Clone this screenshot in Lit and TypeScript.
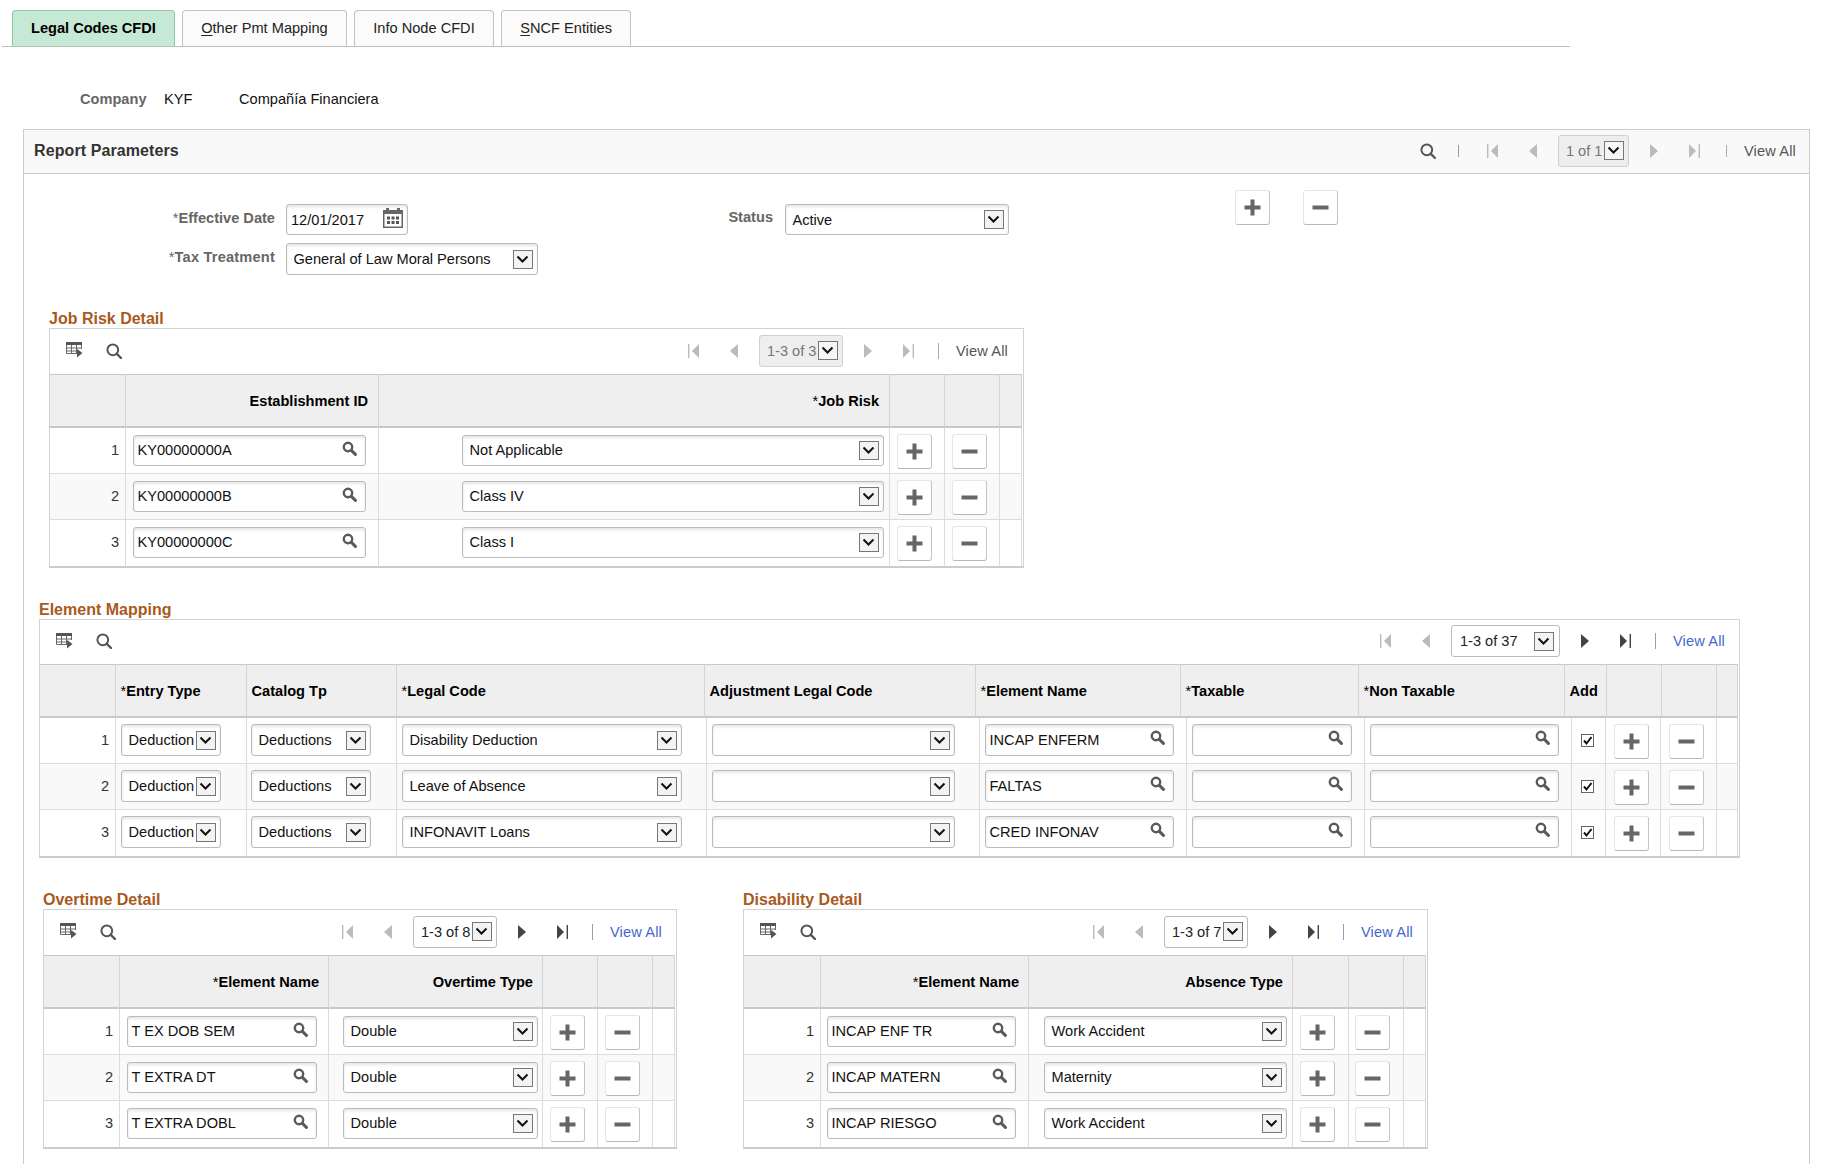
import { LitElement, html, css, svg, nothing } from "lit";
import { customElement } from "lit/decorators.js";

const searchIcon = html`<svg class="tool-search" width="16" height="16" viewBox="0 0 16 16"><circle cx="6.8" cy="6.8" r="5.4" fill="none" stroke="#555" stroke-width="2"/><path d="M10.8 10.8L15 15" stroke="#555" stroke-width="2.4" stroke-linecap="round"/></svg>`;
const promptIcon = html`<svg class="prompt" width="15" height="15" viewBox="0 0 15 15"><circle cx="6" cy="6" r="4.2" fill="none" stroke="#5a5a5a" stroke-width="2.4"/><path d="M9.4 9.4L13.4 13.4" stroke="#5a5a5a" stroke-width="3" stroke-linecap="round"/></svg>`;
const tableIcon = html`<svg class="tool-table" width="17" height="16" viewBox="0 0 17 16"><path d="M0 0H16V3H0Z" fill="#555"/><path d="M.5 3V11.5H11M15.5 3V7M5.5 3V11.5M10.5 3V11M.5 6H15.5M.5 9H11" fill="none" stroke="#666" stroke-width="1"/><path d="M11 7L16.5 11L11 15.5Z" fill="#555"/></svg>`;
const calendarIcon = html`<svg class="cal" width="20" height="20" viewBox="0 0 20 20"><path d="M3 0h3v2h8V0h3v2h3v18H0V2h3z" fill="#666"/><rect x="1.5" y="6" width="17" height="12.5" fill="#fff"/><g fill="#555"><rect x="4" y="8.5" width="3" height="3"/><rect x="8.5" y="8.5" width="3" height="3"/><rect x="13" y="8.5" width="3" height="3"/><rect x="4" y="13" width="3" height="3"/><rect x="8.5" y="13" width="3" height="3"/><rect x="13" y="13" width="3" height="3"/></g></svg>`;
const chevron = svg`<path d="M3.5 5.5L8.5 10.5L13.5 5.5" fill="none" stroke="#111" stroke-width="2"/>`;

const navIcon = (kind: string, on: boolean) => {
  const c = on ? "#444" : "#bbb";
  if (kind === "first") return html`<svg class="nav-ic" width="11" height="14" viewBox="0 0 11 14"><rect x="0" y="0" width="1.4" height="14" fill="${c}"/><path d="M11 0V14L4 7Z" fill="${c}"/></svg>`;
  if (kind === "prev") return html`<svg class="nav-ic i-prev" width="8" height="14" viewBox="0 0 8 14"><path d="M8 0V14L0 7Z" fill="${c}"/></svg>`;
  if (kind === "next") return html`<svg class="nav-ic i-next" width="8" height="14" viewBox="0 0 8 14"><path d="M0 0V14L8 7Z" fill="${c}"/></svg>`;
  return html`<svg class="nav-ic i-last" width="11" height="14" viewBox="0 0 11 14"><path d="M0 0V14L7 7Z" fill="${c}"/><rect x="9.6" y="0" width="1.4" height="14" fill="${c}"/></svg>`;
};

type Col = { w: number; label?: string };
type Cell =
  | { t: "num"; v: string }
  | { t: "in" | "sel"; v: string; w: number; ml: number }
  | { t: "chk" | "add" | "del"; ml: number }
  | { t: "end" };

type GridDef = {
  cls: string;
  title: string;
  right: boolean;
  head: Col[];
  body: number[];
  rows: Cell[][];
  pager: string;
  live: boolean;
  wide?: boolean;
  tight?: boolean;
};

const rowsFor = (ids: string[], mk: (i: number) => Cell[]): Cell[][] => ids.map((n, i) => [{ t: "num", v: n } as Cell, ...mk(i)]);

const jobRisk = ["Not Applicable", "Class IV", "Class I"];
const jobIds = ["KY00000000A", "KY00000000B", "KY00000000C"];
const legal = ["Disability Deduction", "Leave of Absence", "INFONAVIT Loans"];
const elem = ["INCAP ENFERM", "FALTAS", "CRED INFONAV"];
const ot = ["T EX DOB SEM", "T EXTRA DT", "T EXTRA DOBL"];
const dis = ["INCAP ENF TR", "INCAP MATERN", "INCAP RIESGO"];
const abs = ["Work Accident", "Maternity", "Work Accident"];
const nums = ["1", "2", "3"];

const grids: Record<string, GridDef> = {
  job: {
    cls: "g-job", title: "Job Risk Detail", right: true, pager: "1-3 of 3", live: false,
    head: [{ w: 76 }, { w: 253, label: "Establishment ID" }, { w: 511, label: "*Job Risk" }, { w: 55 }, { w: 55 }, { w: 22 }],
    body: [76, 253, 511, 55, 55, 22],
    rows: rowsFor(nums, (i) => [
      { t: "in", v: jobIds[i], w: 233, ml: 7 },
      { t: "sel", v: jobRisk[i], w: 422, ml: 83 },
      { t: "add", ml: 7 }, { t: "del", ml: 7 }, { t: "end" },
    ]),
  },
  map: {
    cls: "g-map", title: "Element Mapping", right: false, pager: "1-3 of 37", live: true, wide: true, tight: true,
    head: [{ w: 76 }, { w: 131, label: "*Entry Type" }, { w: 150, label: "Catalog Tp" }, { w: 308, label: "*Legal Code" }, { w: 271, label: "Adjustment Legal Code" }, { w: 205, label: "*Element Name" }, { w: 178, label: "*Taxable" }, { w: 206, label: "*Non Taxable" }, { w: 42, label: "Add" }, { w: 55 }, { w: 55 }, { w: 21 }],
    body: [76, 131, 150, 310, 273, 207, 178, 207, 34, 55, 56, 21],
    rows: rowsFor(nums, (i) => [
      { t: "sel", v: "Deduction", w: 100, ml: 5 },
      { t: "sel", v: "Deductions", w: 120, ml: 4 },
      { t: "sel", v: legal[i], w: 280, ml: 5 },
      { t: "sel", v: "", w: 243, ml: 5 },
      { t: "in", v: elem[i], w: 189, ml: 5 },
      { t: "in", v: "", w: 160, ml: 5 },
      { t: "in", v: "", w: 189, ml: 5 },
      { t: "chk", ml: 9 },
      { t: "add", ml: 8 }, { t: "del", ml: 8 }, { t: "end" },
    ]),
  },
  ot: {
    cls: "g-ot", title: "Overtime Detail", right: true, pager: "1-3 of 8", live: true,
    head: [{ w: 76 }, { w: 209, label: "*Element Name" }, { w: 214, label: "Overtime Type" }, { w: 55 }, { w: 55 }, { w: 22 }],
    body: [76, 209, 214, 55, 55, 22],
    rows: rowsFor(nums, (i) => [
      { t: "in", v: ot[i], w: 190, ml: 7 },
      { t: "sel", v: "Double", w: 195, ml: 14 },
      { t: "add", ml: 7 }, { t: "del", ml: 7 }, { t: "end" },
    ]),
  },
  dis: {
    cls: "g-dis", title: "Disability Detail", right: true, pager: "1-3 of 7", live: true,
    head: [{ w: 77 }, { w: 208, label: "*Element Name" }, { w: 264, label: "Absence Type" }, { w: 56 }, { w: 55 }, { w: 22 }],
    body: [77, 208, 264, 56, 55, 22],
    rows: rowsFor(nums, (i) => [
      { t: "in", v: dis[i], w: 189, ml: 6 },
      { t: "sel", v: abs[i], w: 243, ml: 15 },
      { t: "add", ml: 7 }, { t: "del", ml: 6 }, { t: "end" },
    ]),
  },
};

@customElement("app-root")
export class AppRoot extends LitElement {
  static styles = css`
    :host { display: block; width: 1822px; height: 1164px; overflow: hidden; background: #fff; font-family: "Liberation Sans", Arial, sans-serif; font-size: 14.6px; color: #111; }
    * { box-sizing: border-box; }
    svg { display: block; flex: none; }

    .tabs { display: flex; gap: 7px; width: 1568px; height: 37px; margin: 10px 0 0 2px; padding-left: 10px; border-bottom: 1px solid #bdbdbd; }
    .tab { height: 36px; padding: 0 18.3px; line-height: 34px; border: 1px solid #c2c2c2; border-bottom: none; border-radius: 4px 4px 0 0; background: #fbfbfb; color: #222; white-space: nowrap; }
    .tab.on { background: #c6e9d5; border-color: #96c4aa; font-weight: bold; color: #000; padding: 0 18px; }
    .tab u { text-underline-offset: 2px; }

    .company { display: flex; height: 20px; line-height: 20px; margin: 42px 0 0 80px; }
    .company b { color: #666; width: 84px; }
    .company span:nth-child(2) { width: 75px; }

    .box { width: 1787px; height: 1035px; margin: 20px 0 0 23px; border: 1px solid #ccc; border-bottom: none; }
    .box-head { display: flex; align-items: center; height: 44px; padding: 0 13px 2px 10px; background: #f9f9f9; border-bottom: 1px solid #ccc; }
    .box-title { font-weight: bold; font-size: 16px; letter-spacing: .1px; color: #333; }
    .box-head .sep1 { width: 1px; height: 12px; background: #999; margin: 0 28px 0 22px; }
    .box-head .tool-search { margin-left: auto; }
    .box-head .nav { margin-left: 0; }
    .box-head .sep { margin-left: 26px; height: 12px; background: #999; }
    .box-head .pager { width: 71px; }

    .form { display: flex; padding-top: 16px; }
    .form-left { display: grid; grid-template-columns: 251px 252px; column-gap: 11px; row-gap: 8px; width: 514px; margin-top: 14px; }
    .lbl { font-weight: bold; color: #666; text-align: right; line-height: 18px; white-space: nowrap; }
    .lbl .star, .hd .star { font-weight: normal; }
    .form-left .l1 { padding-top: 5px; }
    .form-left .l2 { padding-top: 5px; letter-spacing: .2px; }
    .status { display: flex; margin-top: 14px; }
    .status .lbl { width: 235px; margin-right: 12px; padding-top: 4px; }
    .form .plus-1 { margin-left: 226px; }
    .form .minus-1 { margin-left: 33px; }

    .ctl { position: relative; display: flex; align-items: center; flex: none; height: 31px; background: #fff; border: 1px solid #bbb; border-radius: 3px; box-shadow: inset 0 2px 3px rgba(0,0,0,.1); color: #111; white-space: nowrap; overflow: hidden; }
    .cell .ctl > span { margin-top: -2px; }
    .tight .cell .ctl > span { margin-top: 0; }
    .in { padding-left: 3.5px; }
    .sel { padding-left: 6.5px; }
    .date { width: 122px; padding-left: 4px; }
    .tax { width: 252px; height: 32px; }
    .stat { width: 224px; }
    .drop { display: block; width: 20px; height: 19px; margin-left: auto; margin-right: 4px; background: #f3f3f3; border: 1px solid #777; flex: none; }
    .prompt { margin-left: auto; margin-right: 8px; margin-top: -5px; }
    .cal { margin-left: auto; margin-right: 4px; margin-top: -3px; }

    .btn { display: flex; align-items: center; justify-content: center; flex: none; width: 35px; height: 35px; background: #fff; border: 1px solid #e6e6e6; border-right-color: #c4c4c4; border-bottom-color: #b8b8b8; border-radius: 3px; }

    .sec-title { font-weight: bold; font-size: 16px; color: #a9591c; line-height: 19px; height: 19px; white-space: nowrap; }
    .g-job-wrap { margin: 34px 0 0 25px; }
    .g-map-wrap { margin: 32px 0 0 15px; }
    .bottom { display: flex; gap: 66px; margin: 32px 0 0 19px; }
    .grid { border: 1px solid #d2d2d2; border-bottom: 2px solid #ccc; padding-right: 1px; }
    .g-job { width: 975px; }
    .g-map { width: 1701px; }
    .g-ot { width: 634px; }
    .g-dis { width: 685px; }

    .toolbar { display: flex; align-items: center; height: 45px; padding: 0 13px 2px 16px; }
    .g-job .toolbar { padding-right: 14px; }
    .g-map .toolbar { height: 44px; }
    .tool-table { margin-top: -1px; }
    .toolbar .tool-search { margin-left: 23px; }
    .nav { display: flex; align-items: center; margin-left: auto; }
    .i-prev { margin-left: 31px; }
    .pager { display: flex; align-items: center; justify-content: space-between; width: 84px; height: 32px; margin-left: 21px; padding: 0 5px 0 7px; background: #fff; border: 1px solid #bbb; border-radius: 3px; color: #222; white-space: nowrap; }
    .pager .drop { margin: 0 0 0 2px; }
    .pager.off { background: #eee; color: #777; border-color: #d0d0d0; }
    .pager.off .drop { background: #f6f6f6; }
    .pager.wide { width: 109px; padding-left: 8px; }
    .i-next { margin-left: 21px; }
    .i-last { margin-left: 31px; }
    .sep { width: 1px; height: 16px; margin-left: 24px; background: #8f9fb8; }
    .sep.off { background: #b3a999; }
    .view { margin-left: 17px; letter-spacing: .15px; color: #3f69cc; white-space: nowrap; }
    .view.off { color: #555; }

    .hrow, .brow { display: grid; }
    .hd { height: 54px; display: flex; align-items: center; padding: 0 4.5px; background: #efefef; border-top: 1px solid #c8c8c8; border-bottom: 2px solid #c8c8c8; border-right: 1px solid #d4d4d4; font-weight: bold; color: #000; white-space: nowrap; }
    .right .hd { justify-content: flex-end; padding-right: 9px; }
    .g-job .hd { padding-right: 10px; }
    .cell { display: flex; align-items: flex-start; height: 46px; padding-top: 6px; border-right: 1px solid #dcdcdc; border-bottom: 1px solid #dcdcdc; }
    .brow:last-child .cell { border-bottom: none; }
    .brow.alt { background: #f9f9f9; }
    .cell .ctl { margin-top: 1px; }
    .tight .cell .ctl { margin-top: 0; height: 32px; }
    .num { display: block; width: 100%; padding-right: 6px; line-height: 32px; text-align: right; color: #333; }
    .chk { margin-top: 10px; }
  `;

  private drop() {
    return html`<svg class="drop" viewBox="0 0 18 17">${chevron}</svg>`;
  }

  private addBtn(cls = "", ml?: number) {
    return html`<div class="btn ${cls}" style=${ml === undefined ? nothing : `margin-left:${ml}px`}><svg width="17" height="17" viewBox="0 0 17 17"><path d="M6.5 0.5h4v6h6v4h-6v6h-4v-6h-6v-4h6z" fill="#666"/></svg></div>`;
  }

  private delBtn(cls = "", ml?: number) {
    return html`<div class="btn ${cls}" style=${ml === undefined ? nothing : `margin-left:${ml}px`}><svg width="17" height="5" viewBox="0 0 17 5"><rect x="0.5" y="0.5" width="16" height="4" fill="#666"/></svg></div>`;
  }

  private nav(text: string, live: boolean, wide = false, view = live) {
    return html`<div class="nav">
      ${navIcon("first", false)}${navIcon("prev", false)}
      <div class="pager ${live ? "" : "off"} ${wide ? "wide" : ""}"><span>${text}</span>${this.drop()}</div>
      ${navIcon("next", live)}${navIcon("last", live)}
      <div class="sep ${view ? "" : "off"}"></div>
      <span class="view ${view ? "" : "off"}">View All</span>
    </div>`;
  }

  private star(label?: string) {
    if (!label) return nothing;
    return label.startsWith("*") ? html`<span class="star">*</span>${label.slice(1)}` : label;
  }

  private cell(c: Cell) {
    switch (c.t) {
      case "num":
        return html`<div class="cell"><span class="num">${c.v}</span></div>`;
      case "in":
        return html`<div class="cell"><div class="ctl in" style="width:${c.w}px;margin-left:${c.ml}px"><span>${c.v}</span>${promptIcon}</div></div>`;
      case "sel":
        return html`<div class="cell"><div class="ctl sel" style="width:${c.w}px;margin-left:${c.ml}px"><span>${c.v}</span>${this.drop()}</div></div>`;
      case "chk":
        return html`<div class="cell"><svg class="chk" style="margin-left:${c.ml}px" width="13" height="13" viewBox="0 0 13 13"><rect x=".5" y=".5" width="12" height="12" fill="#fff" stroke="#666"/><path d="M3 6.5L5.5 9.5L10.5 3" fill="none" stroke="#111" stroke-width="2"/></svg></div>`;
      case "add":
        return html`<div class="cell">${this.addBtn("", c.ml)}</div>`;
      case "del":
        return html`<div class="cell">${this.delBtn("", c.ml)}</div>`;
      default:
        return html`<div class="cell"></div>`;
    }
  }

  private grid(d: GridDef) {
    return html`<div class="sec-title">${d.title}</div>
      <div class="grid ${d.cls} ${d.tight ? "tight" : ""} ${d.right ? "right" : ""}">
        <div class="toolbar">${tableIcon}${searchIcon}${this.nav(d.pager, d.live, d.wide)}</div>
        <div class="hrow" style="grid-template-columns:${d.head.map((c) => c.w + "px").join(" ")}">
          ${d.head.map((c) => html`<div class="hd"><span>${this.star(c.label)}</span></div>`)}
        </div>
        ${d.rows.map((r, i) => html`<div class="brow ${i === 1 ? "alt" : ""}" style="grid-template-columns:${d.body.map((w) => w + "px").join(" ")}">${r.map((c) => this.cell(c))}</div>`)}
      </div>`;
  }

  render() {
    return html`
      <div class="tabs">
        <div class="tab on">Legal Codes CFDI</div>
        <div class="tab"><u>O</u>ther Pmt Mapping</div>
        <div class="tab">Info Node CFDI</div>
        <div class="tab"><u>S</u>NCF Entities</div>
      </div>
      <div class="company"><b>Company</b><span>KYF</span><span>Compañía Financiera</span></div>
      <div class="box">
        <div class="box-head">
          <span class="box-title">Report Parameters</span>
          ${searchIcon}<div class="sep1"></div>
          ${this.nav("1 of 1", false, false, false)}
        </div>
        <div class="form">
          <div class="form-left">
            <div class="lbl l1"><span class="star">*</span>Effective Date</div>
            <div class="ctl date"><span>12/01/2017</span>${calendarIcon}</div>
            <div class="lbl l2"><span class="star">*</span>Tax Treatment</div>
            <div class="ctl sel tax"><span>General of Law Moral Persons</span>${this.drop()}</div>
          </div>
          <div class="status">
            <div class="lbl">Status</div>
            <div class="ctl sel stat"><span>Active</span>${this.drop()}</div>
          </div>
          ${this.addBtn("plus-1")}${this.delBtn("minus-1")}
        </div>
        <div class="g-job-wrap">${this.grid(grids.job)}</div>
        <div class="g-map-wrap">${this.grid(grids.map)}</div>
        <div class="bottom">
          <div>${this.grid(grids.ot)}</div>
          <div>${this.grid(grids.dis)}</div>
        </div>
      </div>
    `;
  }
}
